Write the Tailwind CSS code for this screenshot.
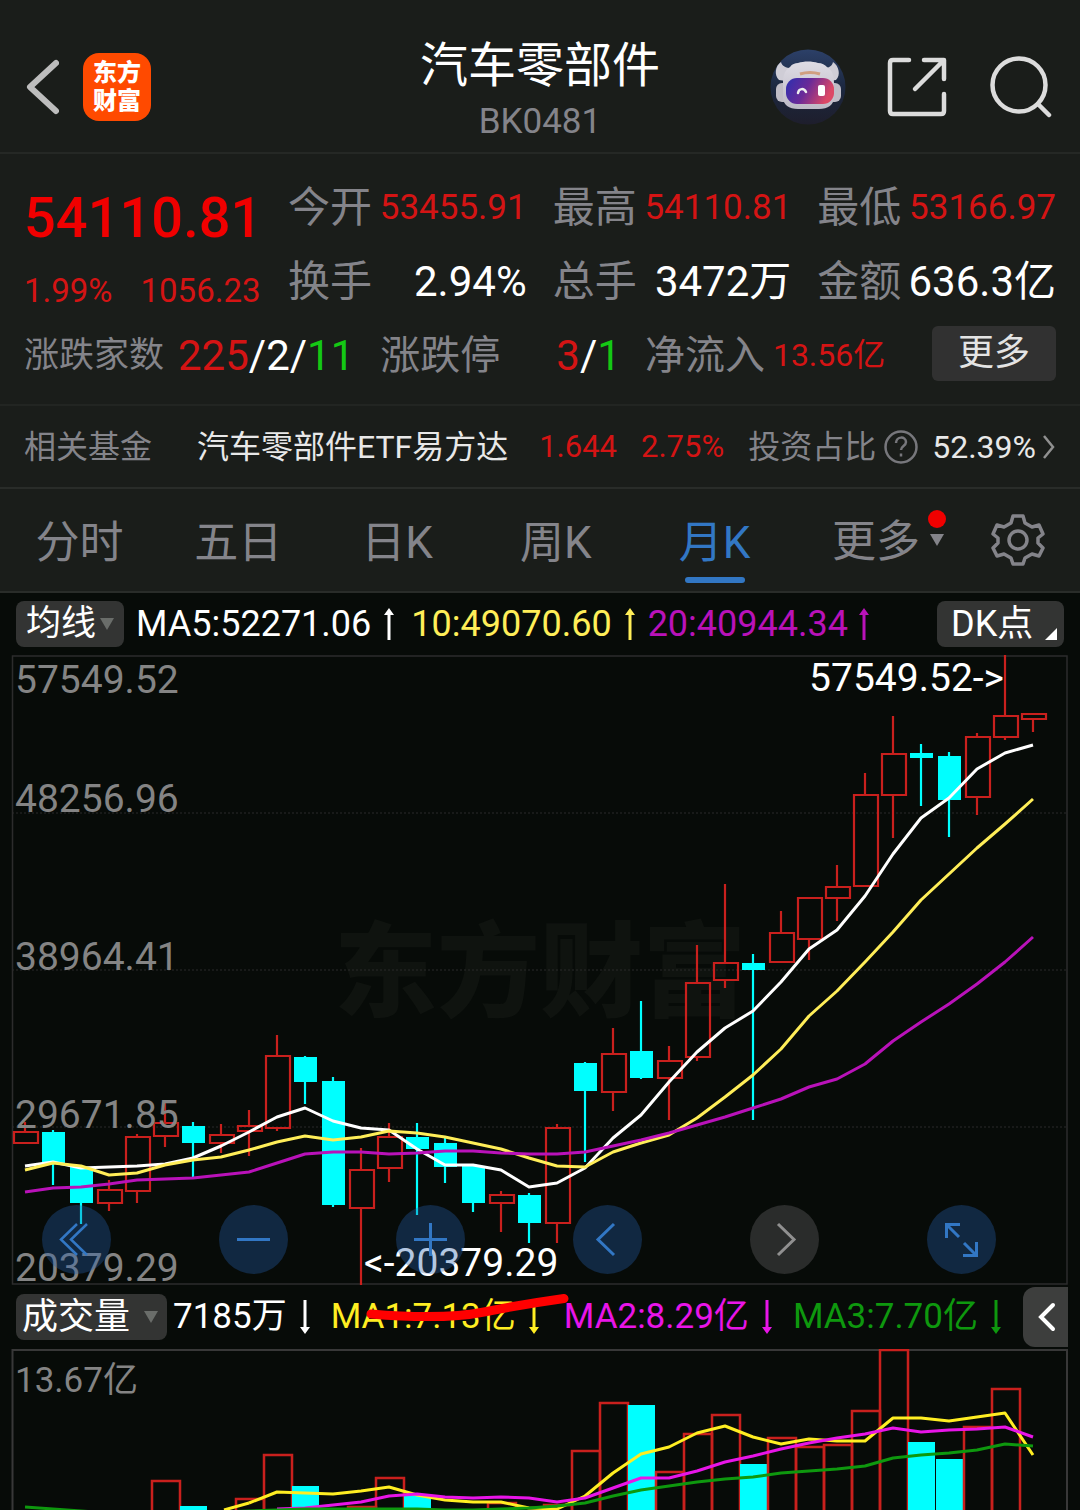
<!DOCTYPE html>
<html lang="zh-CN">
<head>
<meta charset="utf-8">
<meta name="viewport" content="width=device-width, initial-scale=1">
<title>汽车零部件 BK0481</title>
<script src="https://cdn.jsdelivr.net/npm/@tailwindcss/browser@4"></script>
</head>
<body class="bg-[#070b08] font-[Roboto,'Noto_Sans_CJK_SC',sans-serif] text-white overflow-x-hidden">

<div class="bg-[#1a1d1a]">
  <header class="grid h-[154px] grid-cols-[1fr_auto_1fr] border-b-2 border-[#252825] px-6">
    <div class="flex items-center gap-6 pt-[22px]">
      <button type="button" aria-label="返回">
        <svg class="block" width="35" height="56" viewBox="0 0 35 56" fill="none" stroke="#bdbdbd" stroke-width="6" stroke-linecap="round"><path d="M32 4 6 28 32 52" stroke-linejoin="round"/></svg>
      </button>
      <div class="h-[68px] w-[68px] rounded-2xl bg-[#ff4a00] pt-1.5 text-center text-2xl leading-7 font-black">东方<br>财富</div>
    </div>
    <div class="pt-8 text-center">
      <h1 class="text-5xl leading-[68px]">汽车零部件</h1>
      <p class="text-[35px] leading-[44px] text-[#84848a]">BK0481</p>
    </div>
    <div class="flex items-center justify-end gap-10 pt-[22px] pr-1">
      <button type="button" aria-label="智能助手">
        <svg class="block" width="76" height="76" viewBox="0 0 76 76">
          <defs>
            <linearGradient id="sky" x1="0" y1="0" x2="0" y2="1"><stop offset="0" stop-color="#2c4068"/><stop offset=".5" stop-color="#1c2840"/><stop offset="1" stop-color="#1e1e2c"/></linearGradient>
            <linearGradient id="visor" x1="0" y1="0" x2="1" y2=".3"><stop offset="0" stop-color="#2c2fb0"/><stop offset=".5" stop-color="#6a2a98"/><stop offset="1" stop-color="#dc4866"/></linearGradient>
            <linearGradient id="shell" x1="0" y1="0" x2="0" y2="1"><stop offset="0" stop-color="#dedce4"/><stop offset="1" stop-color="#bdbac6"/></linearGradient>
          </defs>
          <circle cx="38" cy="38" r="37.500" fill="url(#sky)"/>
          <path d="M11 13C5 17 4 26 9 31l7 1 5-13c-5 0-9-2-10-6ZM63 13c6 4 8 13 3 18l-7 1-5-13c5 0 8-2 9-6Z" fill="#cfcdd6"/>
          <rect x="6" y="34" width="14" height="19" rx="6" fill="#bfbcc6"/><rect x="57" y="34" width="14" height="19" rx="6" fill="#bfbcc6"/>
          <path d="M13 34c0-8 2-13 7-16 2-3 5-4 8-4 6-2 14-2 20 0 4 0 7 2 9 4 5 3 7 8 7 16v14c0 8-6 12-15 12H28c-9 0-15-4-15-12Z" fill="url(#shell)"/>
          <rect x="16" y="29" width="48" height="26" rx="11" fill="url(#visor)"/>
          <path d="M30 25q10-3 20 0" fill="none" stroke="#d0a080" stroke-width="3"/>
          <path d="M28 44c1-5 6-5 8-1" fill="none" stroke="#eee" stroke-width="2.500" stroke-linecap="round"/>
          <rect x="48" y="36" width="7" height="11" rx="2" fill="#fff"/>
        </svg>
      </button>
      <button type="button" aria-label="分享">
        <svg class="block" width="62" height="62" viewBox="0 0 62 62" fill="none" stroke="#dcdcdc" stroke-width="4.500" stroke-linecap="round" stroke-linejoin="round"><path d="M23 4H7Q4 4 4 7v48q0 3 3 3h48q3 0 3-3V38M38 4h20v19M57 5 29 33"/></svg>
      </button>
      <button type="button" aria-label="搜索">
        <svg class="block" width="64" height="62" viewBox="0 0 64 62" fill="none" stroke="#dcdcdc" stroke-width="4.500" stroke-linecap="round"><circle cx="31" cy="29" r="26.500"/><path d="M50 48 61 59"/></svg>
      </button>
    </div>
  </header>

  <section class="h-[252px] border-b-2 border-[#222522] px-6 pt-4">
    <div class="flex">
      <div class="w-[264px] shrink-0 text-[#f00000]">
        <p class="pt-2.5 text-[56px] leading-[76px] font-medium">54110.81</p>
        <p class="flex gap-7 pt-3 text-[33px] leading-[46px] text-[#d41414]"><span>1.99%</span><span>1056.23</span></p>
      </div>
      <dl class="grid flex-1 grid-cols-3 gap-x-[26px] text-[42px] leading-[75px] whitespace-nowrap">
        <div class="flex justify-between"><dt class="text-[#84848a]">今开</dt><dd class="text-[35px] leading-[75px] text-[#d41414]">53455.91</dd></div>
        <div class="flex justify-between"><dt class="text-[#84848a]">最高</dt><dd class="text-[35px] leading-[75px] text-[#d41414]">54110.81</dd></div>
        <div class="flex justify-between"><dt class="text-[#84848a]">最低</dt><dd class="text-[35px] leading-[75px] text-[#d41414]">53166.97</dd></div>
        <div class="flex justify-between leading-[73px]"><dt class="text-[#84848a]">换手</dt><dd>2.94%</dd></div>
        <div class="flex justify-between leading-[73px]"><dt class="text-[#84848a]">总手</dt><dd>3472万</dd></div>
        <div class="flex justify-between leading-[73px]"><dt class="text-[#84848a]">金额</dt><dd>636.3亿</dd></div>
      </dl>
    </div>
    <div class="flex h-[75px] items-center whitespace-nowrap">
      <dl class="flex flex-1 items-center text-[42px] leading-[75px]">
        <dt class="text-[35px] leading-[75px] text-[#84848a]">涨跌家数</dt>
        <dd class="ml-3.5"><span class="text-[#d41414]">225</span>/2/<span class="text-[#14c814]">11</span></dd>
        <dt class="ml-[26px] text-[40px] leading-[75px] text-[#84848a]">涨跌停</dt>
        <dd class="ml-14"><span class="text-[#d41414]">3</span>/<span class="text-[#14c814]">1</span></dd>
        <dt class="ml-6 text-[40px] leading-[75px] text-[#84848a]">净流入</dt>
        <dd class="ml-2 text-[32px] leading-[75px] text-[#d41414]">13.56亿</dd>
      </dl>
      <button type="button" class="mb-1 h-[55px] w-[124px] rounded-md bg-[#313131] text-4xl leading-[55px] text-[#e4e4e4]">更多</button>
    </div>
  </section>

  <a href="#fund" class="flex h-[83px] items-center border-b-2 border-[#292c29] px-6 text-[32px] leading-[48px] whitespace-nowrap text-[#e8e8e8]">
    <span class="text-[#84848a]">相关基金</span>
    <span class="ml-[45px] flex-1">汽车零部件ETF易方达</span>
    <span class="text-[31px] text-[#d41414]">1.644</span>
    <span class="ml-6 text-[31px] text-[#d41414]">2.75%</span>
    <span class="ml-6 text-[#84848a]">投资占比</span>
    <svg class="mr-3.5 ml-2 shrink-0" width="34" height="34" viewBox="0 0 34 34" fill="none" stroke="#77777c" stroke-width="2.500"><circle cx="17" cy="17" r="15.500"/><path d="M12 13c0-7 10-7 10-1 0 4-5 4-5 8M17 23.500v3"/></svg>
    <span>52.39%</span>
    <svg class="ml-1.5 shrink-0" width="14" height="26" viewBox="0 0 14 26" fill="none" stroke="#909090" stroke-width="2.500"><path d="m2 2 9 11-9 11"/></svg>
  </a>

  <nav class="flex h-[104px] border-b-2 border-[#292c29] text-[44px] leading-[104px] whitespace-nowrap text-[#84848a]">
    <button type="button" class="flex-1 pt-0.5">分时</button>
    <button type="button" class="flex-1 pt-0.5">五日</button>
    <button type="button" class="flex-1 pt-0.5">日K</button>
    <button type="button" class="flex-1 pt-0.5">周K</button>
    <button type="button" class="relative flex-1 pt-0.5 text-[#3277c4]">月K<span class="absolute bottom-2 left-1/2 h-1.5 w-[60px] -translate-x-1/2 rounded-full bg-[#3277c4]"></span></button>
    <button type="button" class="flex w-[162px] items-center justify-center gap-2 pt-1 pl-7">更多
      <svg class="mb-6 shrink-0" width="18" height="40" viewBox="0 0 18 40"><circle cx="9" cy="9" r="9" fill="#f00000"/><path d="M2 24h14L9 36Z" fill="#84848a"/></svg>
    </button>
    <button type="button" aria-label="设置" class="flex w-[124px] items-center justify-center">
      <svg width="54" height="54" viewBox="0 0 54 54" fill="none" stroke="#84848a" stroke-width="3.500" stroke-linejoin="round"><path d="M22 3h10l2 7 7 4 7-2 4 9-5 4v5l5 5-4 8-7-2-7 4-2 6H22l-2-6-7-4-7 2-4-8 5-5v-5l-5-4 4-9 7 2 7-4Z"/><circle cx="27" cy="27" r="9"/></svg>
    </button>
  </nav>
</div>

<main>
  <div class="flex h-[62px] items-center px-4 text-4xl leading-[46px] whitespace-nowrap">
    <button type="button" class="flex h-[46px] w-[108px] items-center justify-center gap-1 rounded-lg bg-[#333433] text-[35px] leading-[46px]">均线
      <svg width="14" height="12" viewBox="0 0 14 12"><path d="M0 0h14L7 12Z" fill="#6a6d6a"/></svg>
    </button>
    <span class="ml-3">MA5:52271.06</span>
    <svg class="ml-3 shrink-0" width="12" height="32" viewBox="0 0 12 32"><path d="M6 0 11 7H7.500V32h-3V7H1Z" fill="#fff"/></svg>
    <span class="ml-4">
      <span class="text-[#ffee58]">10:49070.60</span>
    </span>
    <svg class="ml-3 shrink-0" width="12" height="32" viewBox="0 0 12 32"><path d="M6 0 11 7H7.500V32h-3V7H1Z" fill="#ffee58"/></svg>
    <span class="ml-3 text-[#b912b9]">20:40944.34</span>
    <svg class="ml-2.5 shrink-0" width="12" height="32" viewBox="0 0 12 32"><path d="M6 0 11 7H7.500V32h-3V7H1Z" fill="#b912b9"/></svg>
    <button type="button" class="ml-auto flex h-[46px] w-[127px] items-center gap-3 rounded-lg bg-[#333433] pl-3.5 text-4xl leading-[46px]">DK点
      <svg class="mt-5 shrink-0" width="12" height="12" viewBox="0 0 12 12"><path d="M12 0v12H0Z" fill="#fff"/></svg>
    </button>
  </div>

  <div class="relative">
    <svg id="price" class="block h-auto w-full" viewBox="0 655 1080 630" role="img" aria-label="月K线图"></svg>
    <div class="absolute right-[84px] bottom-[11px] left-[42px] flex justify-between">
      <button type="button" aria-label="最左" class="h-[69px] w-[69px] rounded-full bg-[#265ead]/35"><svg class="block" width="69" height="69" viewBox="0 0 69 69" fill="none" stroke="#3277c4" stroke-width="2.500"><path d="M35 19 19 34.500 35 50M45 19 29 34.500 45 50"/></svg></button>
      <button type="button" aria-label="缩小" class="h-[69px] w-[69px] rounded-full bg-[#265ead]/35"><svg class="block" width="69" height="69" viewBox="0 0 69 69" stroke="#3277c4" stroke-width="3"><path d="M18 34.500h33"/></svg></button>
      <button type="button" aria-label="放大" class="h-[69px] w-[69px] rounded-full bg-[#265ead]/35"><svg class="block" width="69" height="69" viewBox="0 0 69 69" stroke="#3277c4" stroke-width="3"><path d="M18 34.500h33M34.500 18v33"/></svg></button>
      <button type="button" aria-label="左移" class="h-[69px] w-[69px] rounded-full bg-[#265ead]/35"><svg class="block" width="69" height="69" viewBox="0 0 69 69" fill="none" stroke="#3277c4" stroke-width="3"><path d="M41 19 25 34.500 41 50"/></svg></button>
      <button type="button" aria-label="右移" class="h-[69px] w-[69px] rounded-full bg-[#6c6a6c]/35"><svg class="block" width="69" height="69" viewBox="0 0 69 69" fill="none" stroke="#909090" stroke-width="3"><path d="M28 19 44 34.500 28 50"/></svg></button>
      <button type="button" aria-label="全屏" class="h-[69px] w-[69px] rounded-full bg-[#265ead]/35"><svg class="block" width="69" height="69" viewBox="0 0 69 69" fill="none" stroke="#3277c4" stroke-width="3"><path d="M33 19.500H19.500V33M20 20 32 32M37 38 49 50M36 50.500h13.500V37"/></svg></button>
    </div>
  </div>

  <div class="relative flex h-16 items-center pr-3 pl-4 text-[35px] leading-[46px] whitespace-nowrap">
    <button type="button" class="flex h-[46px] w-[151px] items-center gap-3.5 rounded-lg bg-[#333433] pl-1.5 text-4xl leading-[46px]">成交量
      <svg width="14" height="12" viewBox="0 0 14 12"><path d="M0 0h14L7 12Z" fill="#6a6d6a"/></svg>
    </button>
    <span class="ml-1.5">7185万</span>
    <svg class="ml-3 shrink-0" width="12" height="34" viewBox="0 0 12 34"><path d="M6 34 1 27h3.500V0h3v27H11Z" fill="#fff"/></svg>
    <span class="ml-5 text-[#ffee22]">MA1:7.13亿</span>
    <svg class="ml-3 shrink-0" width="12" height="34" viewBox="0 0 12 34"><path d="M6 34 1 27h3.500V0h3v27H11Z" fill="#ffee22"/></svg>
    <span class="ml-6 text-[#e815e8]">MA2:8.29亿</span>
    <svg class="ml-3 shrink-0" width="12" height="34" viewBox="0 0 12 34"><path d="M6 34 1 27h3.500V0h3v27H11Z" fill="#e815e8"/></svg>
    <span class="ml-5 text-[#0e980e]">MA3:7.70亿</span>
    <svg class="ml-3 shrink-0" width="12" height="34" viewBox="0 0 12 34"><path d="M6 34 1 27h3.500V0h3v27H11Z" fill="#0e980e"/></svg>
    <button type="button" aria-label="展开" class="ml-auto flex h-[60px] w-[45px] items-center justify-center rounded-l-xl bg-[#3d3e3d]"><svg width="20" height="32" viewBox="0 0 20 32" fill="none" stroke="#fff" stroke-width="4" stroke-linecap="round"><path d="M17 4 5 16l12 12"/></svg></button>
    <svg class="absolute top-2 left-[364px]" width="208" height="32" viewBox="0 0 208 32" fill="none" stroke="#ff0000" stroke-width="9" stroke-linecap="round"><path d="M7 21C55 25 90 25 120 19 150 13 175 9 200 5.500"/></svg>
  </div>

  <svg id="volume" class="block h-auto w-full" viewBox="0 1349 1080 161" role="img" aria-label="成交量图"></svg>
</main>

<script>
  const STEP = 28, FIRST = 25, RED = '#c9201d', CYAN = '#00ffff', FRAME = '#2c2c2c';
  const cx = i => FIRST + STEP * i;
  const line = (ys, color, w, from = 0) =>
    `<polyline fill="none" stroke="${color}" stroke-width="${w}" stroke-linejoin="round" points="${ys.map((y, i) => cx(i + from) + ',' + y).join(' ')}"/>`;

  // [rising, body top, body bottom, high, low]
  const candles = [
    [1,1132,1143,1122,1143],[0,1132,1163,1130,1185],[0,1167,1203,1167,1224],[1,1190,1203,1180,1211],[1,1137,1191,1134,1203],
    [1,1123,1136,1100,1147],[0,1126,1143,1122,1177],[1,1135,1143,1124,1153],[1,1126,1131,1110,1156],[1,1056,1128,1035,1131],
    [0,1057,1082,1056,1104],[0,1081,1205,1077,1207],[1,1170,1208,1148,1285],[1,1137,1168,1123,1182],[0,1137,1149,1123,1215],
    [0,1143,1167,1138,1183],[0,1166,1203,1166,1212],[1,1195,1203,1191,1232],[0,1195,1223,1193,1243],[1,1128,1223,1124,1243],
    [0,1063,1091,1062,1162],[1,1054,1092,1028,1111],[0,1051,1078,1001,1079],[1,1061,1078,1046,1120],[1,983,1057,945,1061],
    [1,963,980,884,988],[0,963,970,954,1120],[1,933,962,911,962],[1,898,939,898,960],[1,887,898,865,921],
    [1,795,886,773,886],[1,754,795,716,838],[0,753,758,744,806],[0,756,800,752,837],[1,737,797,733,815],
    [1,716,737,655,740],[1,714,719,714,732]
  ];
  const ma5 = [1166,1162,1168,1167,1166,1164,1158,1146,1132,1117,1108,1121,1128,1130,1149,1165,1165,1170,1187,1183,1168,1138,1115,1082,1052,1028,1011,982,949,930,896,854,818,798,769,753,745];
  const ma10 = [1170,1163,1166,1175,1173,1165,1160,1157,1150,1142,1136,1140,1137,1131,1133,1137,1143,1149,1158,1166,1167,1152,1143,1135,1118,1097,1075,1049,1016,991,962,932,900,874,848,824,799];
  const ma20 = [1192,1188,1187,1184,1180,1179,1178,1175,1172,1163,1154,1152,1152,1154,1153,1151,1151,1153,1154,1154,1152,1146,1140,1133,1125,1117,1108,1099,1087,1079,1064,1041,1022,1004,984,962,937];

  let s = `<text x="540" y="1009" text-anchor="middle" font-size="103" font-weight="900" fill="#0f130f">东方财富</text>`;
  for (const y of [813, 970, 1127]) s += `<path d="M12 ${y}H1067" stroke="#2a2a2a" stroke-dasharray="2 2"/>`;
  s += `<path d="M12.500 656H1067V1284H12.500Z" fill="none" stroke="${FRAME}" stroke-width="1.500"/>`;
  candles.forEach(([up, t, b, h, l], i) => {
    const x = cx(i);
    s += up
      ? `<path d="M${x} ${h}V${t}M${x} ${b}V${l}M${x - 11} ${t}h24v${b - t}h-24Z" fill="none" stroke="${RED}" stroke-width="2.200"/>`
      : `<path d="M${x} ${h}V${l}" stroke="${CYAN}" stroke-width="2.200"/><path d="M${x - 11} ${t}h23v${b - t}h-23Z" fill="${CYAN}"/>`;
  });
  s += line(ma5, '#ffffff', 3) + line(ma10, '#ffee58', 3) + line(ma20, '#b912b9', 3);
  [['57549.52', 693], ['48256.96', 812], ['38964.41', 970], ['29671.85', 1128], ['20379.29', 1281]].forEach(([t, y]) =>
    s += `<text x="15" y="${y}" font-size="39" fill="#848484">${t}</text>`);
  s += `<text x="1004" y="691" text-anchor="end" font-size="39" fill="#fff">57549.52-&gt;</text>`;
  s += `<text x="364" y="1276" font-size="39" fill="#fff">&lt;-20379.29</text>`;
  document.getElementById('price').innerHTML = s;

  // [index, top, rising]
  const bars = [
    [5,1481,1],[6,1506,0],[8,1499,1],[9,1455,1],[10,1486,0],[12,1507,1],[13,1478,1],[14,1494,0],[17,1503,1],[19,1505,1],
    [20,1451,1],[21,1403,1],[22,1405,0],[23,1472,1],[24,1434,1],[25,1415,1],[26,1464,0],[27,1438,1],[28,1447,1],
    [29,1445,1],[30,1411,1],[31,1350,1],[32,1442,0],[33,1459,0],[34,1427,1],[35,1389,1]
  ];
  const v1 = [1503,1492,1493,1494,1491,1487,1495,1500,1502,1502,1508,1509,1496,1473,1454,1447,1433,1426,1437,1444,1439,1441,1441,1418,1418,1421,1417,1413,1455];
  const v2 = [1509,1508,1505,1502,1496,1494,1497,1498,1497,1498,1502,1498,1488,1478,1478,1471,1462,1456,1449,1443,1438,1434,1428,1432,1430,1429,1427,1437];
  const v3 = [1507,1509,1511,1513,1514,1514,1513,1512,1511,1510,1509,1509,1509,1509,1509,1510,1510,1509,1508,1506,1503,1496,1490,1486,1482,1479,1477,1473,1471,1469,1466,1458,1455,1453,1450,1444,1446];
  let v = `<path d="M12.500 1520V1350H1067V1520" fill="none" stroke="#383838" stroke-width="2"/>`;
  for (const [i, t, up] of bars) v += up
    ? `<path d="M${cx(i) - 13} 1520V${t}h28V1520" fill="none" stroke="${RED}" stroke-width="2.500"/>`
    : `<path d="M${cx(i) - 13} 1520V${t}h27V1520Z" fill="${CYAN}"/>`;
  v += `<polyline fill="none" stroke="#ffee22" stroke-width="3" points="224,1510 249,1503"/>`;
  v += line(v1, '#ffee22', 3, 8) + line(v2, '#e815e8', 3, 9) + line(v3, '#0e980e', 3);
  v += `<text x="15" y="1392" font-size="35" fill="#848484">13.67亿</text>`;
  document.getElementById('volume').innerHTML = v;
</script>
</body>
</html>
